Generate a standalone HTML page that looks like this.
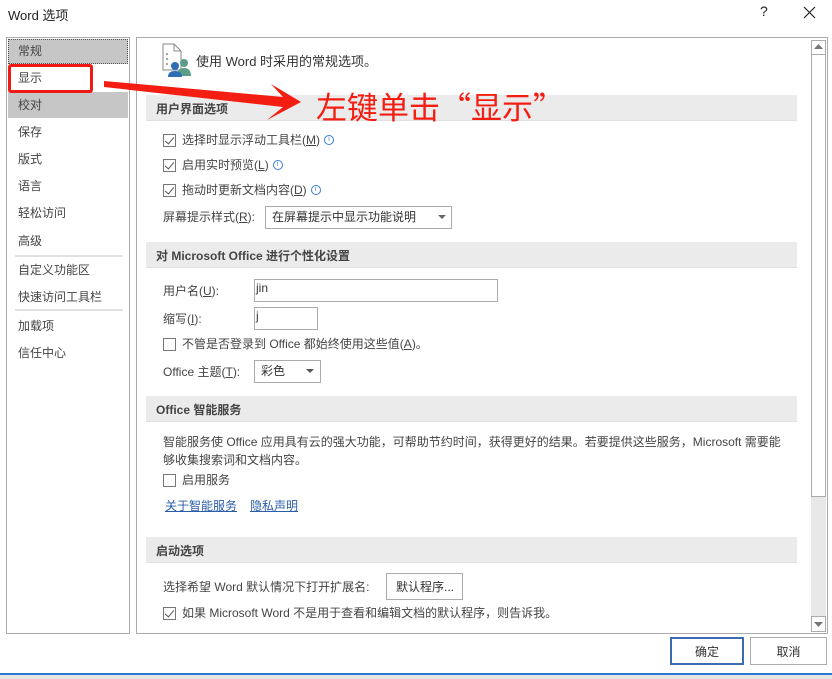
<!DOCTYPE html>
<html><head><meta charset="utf-8"><style>
*{margin:0;padding:0;box-sizing:border-box}
body{width:832px;height:679px;background:#fff;font-family:"Liberation Sans","Noto Sans CJK SC",sans-serif;font-size:12px;color:#444;position:relative;overflow:hidden}
.a{position:absolute;white-space:nowrap}
.nav{position:absolute;left:6px;top:37px;width:124px;height:597px;border:1px solid #ababab;background:#fff}
.ni{position:absolute;left:11px;font-size:12px;color:#444}
.sec{position:absolute;left:146px;width:651px;height:26px;background:#ebebeb;border-bottom:1px solid #e0e0e0;font-weight:bold;font-size:12px;color:#444;padding:5px 0 0 10px}
.cb{position:absolute;width:13px;height:13px;border:1px solid #777;background:#fff}
.cb.k::after{content:"";position:absolute;left:3px;top:0px;width:4px;height:8px;border:solid #555;border-width:0 1.5px 1.5px 0;transform:rotate(40deg)}
.box{position:absolute;border:1px solid #ababab;background:#fff}
.info{display:inline-block;width:10px;height:10px;border:1px solid #3b7dd8;border-radius:50%;font-size:7px;line-height:8px;text-align:center;color:#3b7dd8;vertical-align:3px;margin-left:4px}
</style></head><body>
<div class="a" style="left:8px;top:5px;font-size:13px;color:#222">Word 选项</div>
<div class="a" style="left:760px;top:3px;font-size:14px;color:#222">?</div>
<svg class="a" style="left:803px;top:6px" width="13" height="13"><path d="M1 1L12 12M12 1L1 12" stroke="#222" stroke-width="1.2"/></svg>

<div class="nav">
<div style="position:absolute;left:1px;top:1px;width:120px;height:25px;background:#c6c6c6;border:1px dotted #555"></div>
<div style="position:absolute;left:1px;top:54px;width:120px;height:26px;background:#c6c6c6"></div>
<div style="position:absolute;left:8px;top:217px;width:108px;height:2px;background:#e1e1e1"></div>
<div style="position:absolute;left:8px;top:271px;width:108px;height:2px;background:#e1e1e1"></div>
<div class="ni" style="top:4px">常规</div>
<div class="ni" style="top:31px">显示</div>
<div class="ni" style="top:58px">校对</div>
<div class="ni" style="top:85px">保存</div>
<div class="ni" style="top:112px">版式</div>
<div class="ni" style="top:139px">语言</div>
<div class="ni" style="top:166px">轻松访问</div>
<div class="ni" style="top:194px">高级</div>
<div class="ni" style="top:223px">自定义功能区</div>
<div class="ni" style="top:250px">快速访问工具栏</div>
<div class="ni" style="top:279px">加载项</div>
<div class="ni" style="top:306px">信任中心</div>
</div>
<div class="a" style="left:8px;top:64px;width:85px;height:29px;border:3px solid #f01a14;border-radius:3px"></div>

<div class="a" style="left:136px;top:37px;width:692px;height:597px;border:1px solid #ababab"></div>
<div class="a" style="left:811px;top:40px;width:15px;height:592px;background:#e8e8e8"></div>
<div class="a" style="left:811px;top:40px;width:15px;height:457px;border:1px solid #ababab;background:#fff"></div>
<div class="a" style="left:811px;top:40px;width:15px;height:15px;border:1px solid #ababab;background:#fff"></div>
<svg class="a" style="left:814px;top:44px" width="9" height="6"><path d="M0 5L4.5 0L9 5Z" fill="#777"/></svg>
<div class="a" style="left:811px;top:616px;width:15px;height:16px;border:1px solid #ababab;background:#fff"></div>
<svg class="a" style="left:814px;top:622px" width="9" height="6"><path d="M0 0L4.5 5L9 0Z" fill="#777"/></svg>

<svg class="a" style="left:162px;top:43px" width="30" height="35">
<path d="M1 1H12L19 8V27H1Z" fill="#fff" stroke="#888"/><path d="M12 1V8H19" fill="none" stroke="#888"/>
<circle cx="5" cy="11" r="1" fill="#888"/><circle cx="5" cy="16" r="1" fill="#888"/><circle cx="5" cy="21" r="1" fill="#888"/>
<circle cx="22" cy="20" r="4" fill="#5a9e8a"/><path d="M15 33Q15 25 22 25Q29 25 29 33Z" fill="#5a9e8a"/>
<circle cx="13" cy="23" r="4" fill="#2f6db5"/><path d="M6 34Q6 28 13 28Q20 28 20 34Z" fill="#2f6db5"/></svg>
<div class="a" style="left:196px;top:51px;font-size:13px;color:#333">使用 Word 时采用的常规选项。</div>

<div class="sec" style="top:95px">用户界面选项</div>
<div class="cb k" style="left:163px;top:134px"></div><div class="a" style="left:182px;top:131px">选择时显示浮动工具栏(<u>M</u>)<span class="info">i</span></div>
<div class="cb k" style="left:163px;top:159px"></div><div class="a" style="left:182px;top:156px">启用实时预览(<u>L</u>)<span class="info">i</span></div>
<div class="cb k" style="left:163px;top:184px"></div><div class="a" style="left:182px;top:181px">拖动时更新文档内容(<u>D</u>)<span class="info">i</span></div>
<div class="a" style="left:163px;top:208px">屏幕提示样式(<u>R</u>):</div>
<div class="box" style="left:265px;top:206px;width:187px;height:23px"></div>
<div class="a" style="left:272px;top:208px;color:#333">在屏幕提示中显示功能说明</div>
<svg class="a" style="left:438px;top:215px" width="8" height="5"><path d="M0 0L4 4L8 0Z" fill="#666"/></svg>

<div class="sec" style="top:242px">对 Microsoft Office 进行个性化设置</div>
<div class="a" style="left:163px;top:282px">用户名(<u>U</u>):</div>
<div class="box" style="left:254px;top:279px;width:244px;height:23px"></div>
<div class="a" style="left:256px;top:281px;color:#333">jin</div>
<div class="a" style="left:163px;top:310px">缩写(<u>I</u>):</div>
<div class="box" style="left:254px;top:307px;width:64px;height:23px"></div>
<div class="a" style="left:256px;top:309px;color:#333">j</div>
<div class="cb" style="left:163px;top:338px"></div><div class="a" style="left:182px;top:335px">不管是否登录到 Office 都始终使用这些值(<u>A</u>)。</div>
<div class="a" style="left:163px;top:363px">Office 主题(<u>T</u>):</div>
<div class="box" style="left:254px;top:360px;width:67px;height:23px"></div>
<div class="a" style="left:261px;top:362px;color:#333">彩色</div>
<svg class="a" style="left:306px;top:369px" width="8" height="5"><path d="M0 0L4 4L8 0Z" fill="#555"/></svg>

<div class="sec" style="top:396px">Office 智能服务</div>
<div class="a" style="left:163px;top:433px">智能服务使 Office 应用具有云的强大功能，可帮助节约时间，获得更好的结果。若要提供这些服务，Microsoft 需要能</div>
<div class="a" style="left:163px;top:451px">够收集搜索词和文档内容。</div>
<div class="cb" style="left:163px;top:474px"></div><div class="a" style="left:182px;top:471px">启用服务</div>
<div class="a" style="left:165px;top:497px;color:#2a5da8;text-decoration:underline">关于智能服务</div>
<div class="a" style="left:250px;top:497px;color:#2a5da8;text-decoration:underline">隐私声明</div>

<div class="sec" style="top:537px">启动选项</div>
<div class="a" style="left:163px;top:578px">选择希望 Word 默认情况下打开扩展名:</div>
<div class="box" style="left:386px;top:573px;width:77px;height:27px;background:#fdfdfd"></div>
<div class="a" style="left:396px;top:578px;color:#333">默认程序...</div>
<div class="cb k" style="left:163px;top:607px"></div><div class="a" style="left:182px;top:604px">如果 Microsoft Word 不是用于查看和编辑文档的默认程序，则告诉我。</div>

<div class="a" style="left:670px;top:637px;width:74px;height:28px;border:2px solid #3c6bb4;background:#fff;text-align:center;padding-top:4px;color:#333">确定</div>
<div class="a" style="left:750px;top:637px;width:77px;height:28px;border:1px solid #adadad;background:#fff;text-align:center;padding-top:5px;color:#333">取消</div>
<div class="a" style="left:0;top:673px;width:832px;height:2px;background:#2b79d0"></div>
<div class="a" style="left:0;top:675px;width:832px;height:4px;background:#e5e5e5"></div>

<svg class="a" style="left:0;top:0" width="832" height="140"><path d="M104 81L283 97L271 84L301 102L267 120L283 107L104 87Z" fill="#f41d12"/></svg>
<div class="a" style="left:316px;top:86px;font-size:31px;color:#f41d12;font-family:'Noto Sans CJK SC',sans-serif;line-height:40px">左键单击“显示”</div>
</body></html>
